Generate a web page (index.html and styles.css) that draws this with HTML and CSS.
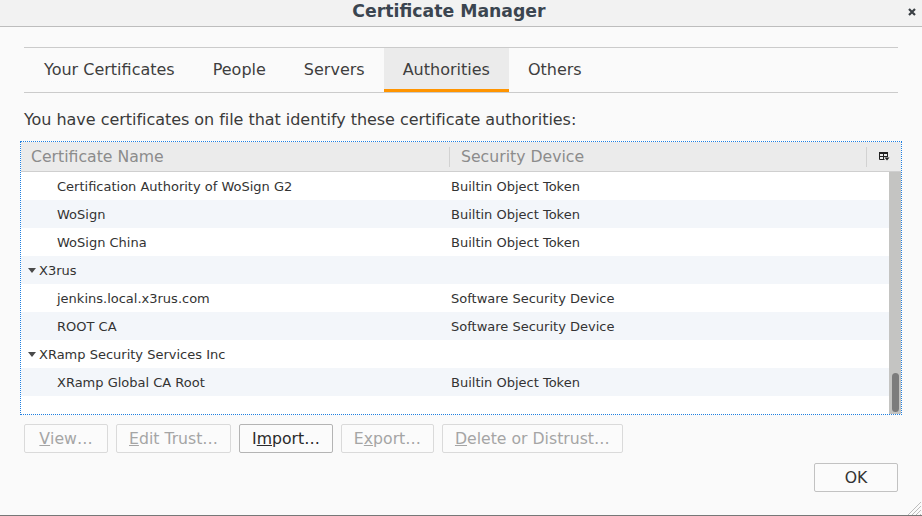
FILE: index.html
```html
<!DOCTYPE html>
<html>
<head>
<meta charset="utf-8">
<link rel="stylesheet" href="styles.css">
</head>
<body>
<div class="window">
  <div class="titlebar">
    <div class="title">Certificate Manager</div>
    <div class="close">
      <svg width="8" height="8" viewBox="0 0 8 8"><path d="M1 1L7 7M7 1L1 7" stroke="#3a3f44" stroke-width="2.2" fill="none"/></svg>
    </div>
  </div>
  <div class="content">
    <div class="tabs">
      <div class="tab">Your Certificates</div>
      <div class="tab">People</div>
      <div class="tab">Servers</div>
      <div class="tab active">Authorities</div>
      <div class="tab">Others</div>
    </div>
    <div class="desc">You have certificates on file that identify these certificate authorities:</div>
    <div class="tree">
      <div class="thead">
        <div class="th col1">Certificate Name</div>
        <div class="sep"></div>
        <div class="th col2">Security Device</div>
        <div class="sep"></div>
        <div class="picker">
          <svg width="11" height="9" viewBox="0 0 11 9">
            <rect x="0" y="0" width="9" height="2" fill="#222"/>
            <path d="M0.5 0V7.5H5.5M4.5 0V7.5M8.5 0V5M0.5 4.5H8.5" stroke="#222" stroke-width="1" fill="none"/>
            <path d="M5.5 5.5H10.5L8 8.5Z" fill="#222"/>
          </svg>
        </div>
      </div>
      <div class="tbody">
        <div class="rows">
          <div class="row"><div class="c1 child">Certification Authority of WoSign G2</div><div class="c2">Builtin Object Token</div></div>
          <div class="row alt"><div class="c1 child">WoSign</div><div class="c2">Builtin Object Token</div></div>
          <div class="row"><div class="c1 child">WoSign China</div><div class="c2">Builtin Object Token</div></div>
          <div class="row alt"><div class="c1 group"><span class="twisty"></span>X3rus</div><div class="c2"></div></div>
          <div class="row"><div class="c1 child">jenkins.local.x3rus.com</div><div class="c2">Software Security Device</div></div>
          <div class="row alt"><div class="c1 child">ROOT CA</div><div class="c2">Software Security Device</div></div>
          <div class="row"><div class="c1 group"><span class="twisty"></span>XRamp Security Services Inc</div><div class="c2"></div></div>
          <div class="row alt"><div class="c1 child">XRamp Global CA Root</div><div class="c2">Builtin Object Token</div></div>
        </div>
        <div class="scrollbar"><div class="thumb"></div></div>
      </div>
    </div>
    <div class="buttons">
      <div class="btn disabled"><u>V</u>iew…</div>
      <div class="btn disabled"><u>E</u>dit Trust…</div>
      <div class="btn">I<u>m</u>port…</div>
      <div class="btn disabled">E<u>x</u>port…</div>
      <div class="btn disabled"><u>D</u>elete or Distrust…</div>
    </div>
    <div class="footer">
      <div class="btn ok">OK</div>
    </div>
  </div>
  <div class="grip">
    <svg width="14" height="14" viewBox="0 0 14 14"><path d="M13 4L4 13M13 8L8 13M13 12L12 13M13 0L0 13" stroke="#bdbdbd" stroke-width="1" fill="none"/></svg>
  </div>
</div>
</body>
</html>
```
FILE: styles.css
```css
html, body {
  margin: 0;
  padding: 0;
}
body {
  font-family: "DejaVu Sans", sans-serif;
  background: #fafafa;
}
.window {
  position: relative;
  width: 922px;
  height: 516px;
  box-sizing: border-box;
  background: #fafafa;
  border-bottom: 1px solid #777;
  display: flex;
  flex-direction: column;
  overflow: hidden;
}
.titlebar {
  height: 26px;
  background: #f2f2f2;
  border-bottom: 1px solid #bdbdbd;
  display: flex;
  align-items: center;
}
.title {
  flex: 1;
  text-align: center;
  font-weight: bold;
  font-size: 17.3px;
  color: #3b4550;
  padding-bottom: 4px;
}
.close {
  width: 24px;
  display: flex;
  align-items: center;
  justify-content: center;
  padding-left: 3px;
  box-sizing: border-box;
  padding-bottom: 2px;
}
.content {
  padding: 0 24px;
  display: flex;
  flex-direction: column;
}
.tabs {
  margin-top: 20px;
  border-top: 1px solid #cbcbcb;
  border-bottom: 1px solid #cbcbcb;
  display: flex;
}
.tab {
  height: 44px;
  line-height: 44px;
  padding: 0 19px;
  font-size: 16px;
  color: #3e3e3e;
}
.tab:first-child {
  padding-left: 20px;
}
.tab.active {
  background: #ebebeb;
  box-shadow: inset 0 -3px 0 #ff9400;
}
.desc {
  margin-top: 17px;
  font-size: 16px;
  letter-spacing: -0.04px;
  color: #3a3a3a;
  line-height: 20px;
}
.tree {
  margin: 11px -4px 0 -4px;
  height: 274px;
  box-sizing: border-box;
  border: 1px dotted #1f7fe0;
  background: #fff;
  display: flex;
  flex-direction: column;
}
.thead {
  height: 29px;
  flex: none;
  background: #ebebeb;
  border-bottom: 1px solid #cfcfcf;
  display: flex;
  align-items: center;
}
.th {
  font-size: 15.7px;
  color: #8c8c8c;
}
.th.col1 {
  width: 418px;
  padding-left: 10px;
}
.th.col2 {
  width: 405px;
  padding-left: 11px;
}
.sep {
  width: 1px;
  height: 20px;
  background: #d2d2d2;
}
.picker {
  flex: 1;
  display: flex;
  justify-content: center;
  padding-left: 1px;
}
.tbody {
  flex: 1;
  display: flex;
  min-height: 0;
}
.rows {
  flex: 1;
}
.row {
  height: 28px;
  display: flex;
  align-items: center;
  font-size: 13px;
  color: #333;
}
.row.alt {
  background: #f3f6fa;
}
.c1 {
  width: 428px;
  box-sizing: border-box;
}
.c1.child {
  padding-left: 36px;
}
.c1.group {
  padding-left: 7px;
  display: flex;
  align-items: center;
}
.twisty {
  width: 0;
  height: 0;
  border-left: 4px solid transparent;
  border-right: 4px solid transparent;
  border-top: 5px solid #4a4a4a;
  margin-right: 3px;
  margin-top: 1px;
}
.c2 {
  padding-left: 2px;
}
.scrollbar {
  width: 12px;
  background: #c4c4c2;
  display: flex;
  flex-direction: column;
  justify-content: flex-end;
  align-items: center;
  padding-bottom: 2px;
  box-sizing: border-box;
}
.thumb {
  width: 7px;
  height: 39px;
  border-radius: 4px;
  background: #7c7c7c;
}
.buttons {
  margin-top: 9px;
  display: flex;
  gap: 8px;
}
.btn {
  height: 29px;
  box-sizing: border-box;
  min-width: 84px;
  padding: 0 12px;
  border: 1px solid #b4b4b4;
  border-radius: 2px;
  background: #fbfbfb;
  font-size: 15.7px;
  color: #2a2a2a;
  display: flex;
  align-items: center;
  justify-content: center;
}
.btn.disabled {
  border-color: #dadada;
  color: #a5a5a5;
}
.footer {
  margin-top: 10px;
  display: flex;
  justify-content: flex-end;
}
.btn.ok {
  width: 84px;
  color: #333;
  border-color: #c2c2c2;
}
.grip {
  position: absolute;
  right: 0;
  bottom: 0;
  width: 14px;
  height: 14px;
}
```
